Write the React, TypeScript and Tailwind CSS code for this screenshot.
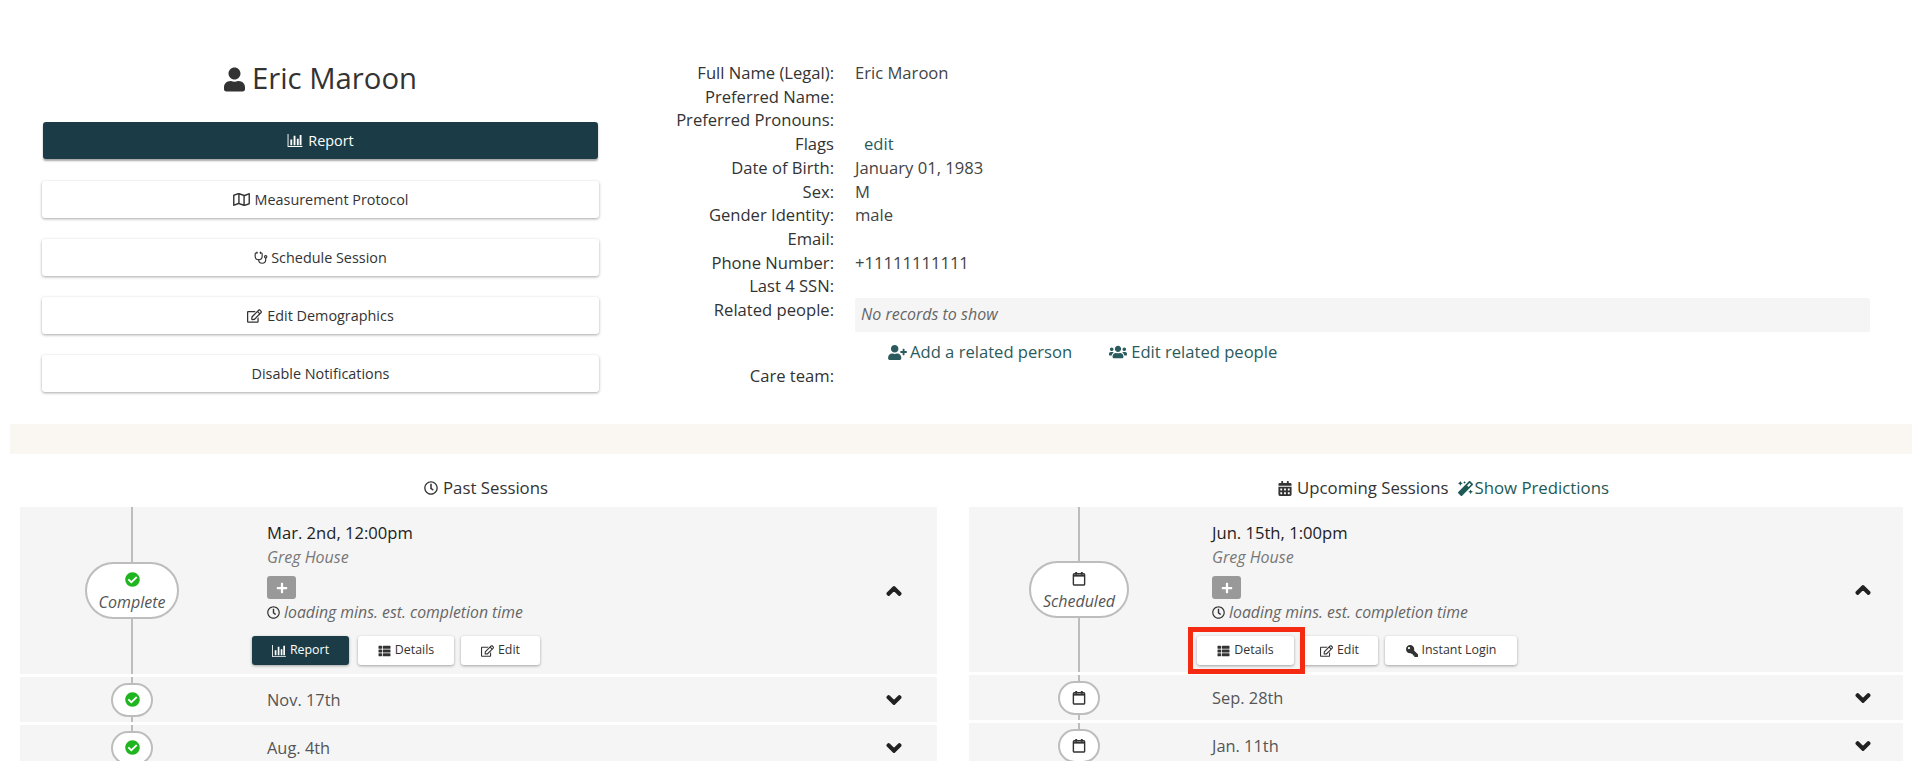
import type { ReactNode } from "react";
import { FaCalendarAlt, FaCheckCircle, FaChevronDown, FaChevronUp, FaKey, FaMagic, FaPlus, FaRegClock, FaRegEdit, FaRegMap, FaThList, FaUser, FaUserPlus, FaUsers } from "react-icons/fa";
import { Stethoscope } from "lucide-react";

const StatsIcon = ({ className }: { className?: string }) => (
  <svg viewBox="0 0 16 14" className={className} fill="currentColor">
    <path d="M0 0h1v13h15v1H0z" />
    <path d="M3 6h2v6H3zM6.5 2h2v10h-2zM10 5h2v7h-2zM13 1h2v11h-2z" />
  </svg>
);

const CalendarIcon = ({ className }: { className?: string }) => (
  <svg viewBox="0 0 14 16" className={className} fill="none" stroke="currentColor">
    <rect x="1" y="3" width="12" height="12" rx="1" strokeWidth="1.5" />
    <path d="M1 5h12" strokeWidth="2" />
    <path d="M4 1v3M10 1v3" strokeWidth="2" />
  </svg>
);

const MainButton = ({ children, dark }: { children: ReactNode; dark?: boolean }) => (
  <button
    className={
      dark
        ? "flex h-[37px] items-center justify-center gap-[5px] rounded-[3px] bg-[#1b3c46] text-[14.4px] text-white shadow-[0_2px_2px_rgba(0,0,0,0.35)]"
        : "-mx-px flex h-[37px] items-center justify-center gap-[5px] rounded-[3px] bg-white text-[14.4px] text-[#333] shadow-[0_1px_3px_rgba(0,0,0,0.35)]"
    }
  >
    {children}
  </button>
);

const SmallButton = ({ children, dark, width, marked }: { children: ReactNode; dark?: boolean; width: string; marked?: boolean }) => (
  <button
    className={`relative flex h-[29px] items-center justify-center gap-[4px] rounded-[3px] text-[12.4px] shadow-[0_1px_3px_rgba(0,0,0,0.35)] ${width} ${dark ? "bg-[#1b3c46] text-white" : "bg-white text-[#333]"}`}
  >
    {children}
    {marked && <span className="absolute -top-[9px] -right-[11px] -bottom-[9px] -left-[9px] z-10 border-[5px] border-[#f52a12]" />}
  </button>
);

const Field = ({ label, children }: { label: string; children?: ReactNode }) => (
  <>
    <div className="text-right font-medium text-[#333]">{label}</div>
    <div className="text-[#444]">{children}</div>
  </>
);

const Pill = ({ wide, label, scheduled }: { wide?: string; label?: string; scheduled?: boolean }) => (
  <div className={`relative z-10 flex flex-col items-center rounded-full border-2 border-[#bdbdbd] bg-white ${wide ?? "h-[34px] w-[42px] justify-center"}`}>
    {scheduled ? <CalendarIcon className="h-[15px] w-[14px] text-[#333]" /> : <FaCheckCircle className="h-[15px] w-[15px] text-[#1fb51f]" />}
    {label && <span className="mt-[5px] text-[16px] leading-[20px] text-[#555] italic">{label}</span>}
  </div>
);

const SessionOpen = ({ date, label, scheduled, col, height, actions, chevron }: { date: string; label: string; scheduled?: boolean; col: string; height: string; actions: ReactNode; chevron: string }) => (
  <div className={`flex bg-[#f5f5f5] ${height}`}>
    <div className={`relative flex shrink-0 items-center justify-center ${col}`}>
      <div className="absolute top-0 bottom-0 left-1/2 w-[2px] -translate-x-1/2 bg-[#bdbdbd]" />
      <Pill wide={`${scheduled ? "w-[100px]" : "w-[94px]"} h-[57px] pt-[8px]`} label={label} scheduled={scheduled} />
    </div>
    <div className="flex-1 pt-[14px] pl-[23px]">
      <div className="text-[16.6px] leading-[24px] font-medium text-[#222]">{date}</div>
      <div className="text-[16px] leading-[24px] text-[#777] italic">Greg House</div>
      <div className="mt-[7px] flex h-[23px] w-[29px] items-center justify-center rounded-[3px] bg-[#999]">
        <FaPlus className="h-[12px] w-[12px] text-white" />
      </div>
      <div className="mt-[2px] flex items-center gap-[4px] text-[15.8px] leading-[22px] text-[#666] italic">
        <FaRegClock className="h-[13px] w-[13px] text-[#333]" />
        loading mins. est. completion time
      </div>
      <div className="mt-[13px] -ml-[15px] flex gap-[7px]">{actions}</div>
    </div>
    <div className={`flex items-center ${chevron}`}>
      <FaChevronUp className="h-[16px] w-[16px] stroke-[50] text-[#222]" />
    </div>
  </div>
);

const SessionRow = ({ date, scheduled, col, chevron }: { date: string; scheduled?: boolean; col: string; chevron: string }) => (
  <div className="flex h-[45px] shrink-0 bg-[#f5f5f5]">
    <div className={`relative flex shrink-0 items-center justify-center ${col}`}>
      <div className="absolute top-0 bottom-0 left-1/2 w-[2px] -translate-x-1/2 bg-[#bdbdbd]" />
      <Pill scheduled={scheduled} />
    </div>
    <div className="flex flex-1 items-center pt-[1px] pl-[23px] text-[16.4px] text-[#555]">{date}</div>
    <div className={`flex items-center ${chevron}`}>
      <FaChevronDown className="h-[16px] w-[16px] stroke-[50] text-[#222]" />
    </div>
  </div>
);

export default function App() {
  return (
    <div className="h-[779px] overflow-hidden bg-white font-['Open_Sans',sans-serif] text-[#333]">
      <div className="flex h-[424px]">
        <div className="ml-[43px] flex w-[555px] flex-col pt-[58px]">
          <h1 className="flex h-[42px] items-center justify-center gap-[7px] text-[29.3px] text-[#333]">
            <FaUser className="h-[25px] w-[21px] text-[#333]" />
            Eric Maroon
          </h1>
          <div className="mt-[22px] flex flex-col gap-[21px]">
            <MainButton dark><StatsIcon className="h-[13px] w-[16px]" /> Report</MainButton>
            <div className="mt-px flex flex-col gap-[21px]">
              <MainButton><FaRegMap className="h-[15px] w-[17px]" /> Measurement Protocol</MainButton>
              <MainButton><Stethoscope className="-mr-[2px] h-[14px] w-[14px]" /> Schedule Session</MainButton>
              <MainButton><FaRegEdit className="h-[14px] w-[15px]" /> Edit Demographics</MainButton>
              <MainButton>Disable Notifications</MainButton>
            </div>
          </div>
        </div>
        <div className="ml-[46px] grid w-[1226px] grid-cols-[190px_1fr] content-start gap-x-[21px] pt-[61px] text-[16.6px] leading-[23.7px]">
          <Field label="Full Name (Legal):">Eric Maroon</Field>
          <Field label="Preferred Name:" />
          <Field label="Preferred Pronouns:" />
          <Field label="Flags"><span className="ml-[9px] text-[#2b5b5c]">edit</span></Field>
          <Field label="Date of Birth:">January 01, 1983</Field>
          <Field label="Sex:">M</Field>
          <Field label="Gender Identity:">male</Field>
          <Field label="Email:" />
          <Field label="Phone Number:">+11111111111</Field>
          <Field label="Last 4 SSN:" />
          <Field label="Related people:">
            <div className="flex h-[34px] items-center rounded-[2px] bg-[#f5f5f5] pl-[6px] text-[16px] text-[#666] italic">No records to show</div>
            <div className="mt-[8px] flex h-[24px] items-center pl-[33px] text-[#2b5b5c]">
              <FaUserPlus className="h-[15px] w-[19px]" />
              <span className="ml-[3px]">Add a related person</span>
              <FaUsers className="ml-[37px] h-[18px] w-[18px]" />
              <span className="ml-[4px]">Edit related people</span>
            </div>
          </Field>
          <Field label="Care team:" />
        </div>
      </div>

      <div className="mr-[8px] ml-[10px] h-[30px] bg-[#faf6f1]" />

      <div className="mt-[22px] grid grid-cols-[917px_934px] gap-x-[32px] pl-[20px]">
        <section>
          <h2 className="mb-[7px] flex h-[24px] items-center justify-center gap-[5px] pl-[15px] text-[16.8px] font-medium">
            <FaRegClock className="h-[14px] w-[14px]" />
            Past Sessions
          </h2>
          <div className="flex h-[254px] flex-col gap-[3px] overflow-hidden">
            <SessionOpen
              date="Mar. 2nd, 12:00pm"
              label="Complete"
              col="w-[224px]"
              height="h-[167px] shrink-0"
              chevron="pr-[35px]"
              actions={
                <>
                  <SmallButton dark width="w-[97px]"><StatsIcon className="h-[12px] w-[14px]" /> Report</SmallButton>
                  <SmallButton width="ml-[2px] w-[96px]"><FaThList className="h-[12px] w-[13px]" /> Details</SmallButton>
                  <SmallButton width="w-[79px]"><FaRegEdit className="h-[12px] w-[13px]" /> Edit</SmallButton>
                </>
              }
            />
            <SessionRow date="Nov. 17th" col="w-[224px]" chevron="pr-[35px]" />
            <SessionRow date="Aug. 4th" col="w-[224px]" chevron="pr-[35px]" />
          </div>
        </section>
        <section>
          <h2 className="mb-[7px] flex h-[24px] items-center justify-center gap-[5px] pl-[15px] text-[16.8px] font-medium">
            <FaCalendarAlt className="h-[15px] w-[14px]" />
            Upcoming Sessions
            <span className="ml-[5px] flex items-center gap-[1px] text-[#1d5a55]">
              <FaMagic className="h-[15px] w-[15px]" />
              Show Predictions
            </span>
          </h2>
          <div className="flex h-[254px] flex-col gap-[3px] overflow-hidden">
            <SessionOpen
              date="Jun. 15th, 1:00pm"
              label="Scheduled"
              scheduled
              col="w-[220px]"
              height="h-[165px] shrink-0"
              chevron="pr-[32px]"
              actions={
                <>
                  <SmallButton width="w-[97px]" marked><FaThList className="h-[12px] w-[13px]" /> Details</SmallButton>
                  <SmallButton width="w-[77px]"><FaRegEdit className="h-[12px] w-[13px]" /> Edit</SmallButton>
                  <SmallButton width="w-[132px]"><FaKey className="h-[12px] w-[12px] -scale-x-100" /> Instant Login</SmallButton>
                </>
              }
            />
            <SessionRow date="Sep. 28th" scheduled col="w-[220px]" chevron="pr-[32px]" />
            <SessionRow date="Jan. 11th" scheduled col="w-[220px]" chevron="pr-[32px]" />
          </div>
        </section>
      </div>
    </div>
  );
}
